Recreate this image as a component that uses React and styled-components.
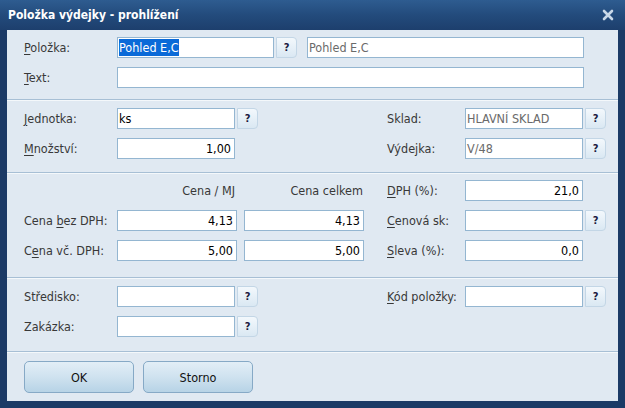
import React from 'react';
import styled, { createGlobalStyle } from 'styled-components';

const Global = createGlobalStyle`
  html, body {
    margin: 0;
    padding: 0;
    background: #1b3a66;
  }
  body {
    font-family: "DejaVu Sans Condensed", Tahoma, "Liberation Sans", sans-serif;
    font-size: 12.5px;
  }
`;

const Window = styled.div`
  width: 625px;
  height: 408px;
  box-sizing: border-box;
  background: #1b3a66;
  padding: 0 7px 7px 7px;
  display: flex;
  flex-direction: column;
`;

const TitleBar = styled.div`
  height: 30px;
  margin: 0 -7px;
  padding: 0 8px 0 8px;
  display: flex;
  align-items: center;
  justify-content: space-between;
  background: linear-gradient(#2e5c90, #234b7c 50%, #1d3f6d);
  color: #fff;
  font-weight: bold;
  font-size: 12px;
`;

const CloseIcon = styled.svg`
  width: 12px;
  height: 12px;
  margin-right: 3px;
`;

const Body = styled.div`
  flex: 1;
  background: #e0e9f2;
  display: flex;
  flex-direction: column;
`;

const Section = styled.div`
  padding: ${(p) => p.$pad || '7px 13px 0 17px'};
  height: ${(p) => p.$h}px;
  box-sizing: border-box;
  border-bottom: ${(p) => (p.$last ? 'none' : '1px solid #a7bfd5')};
  box-shadow: ${(p) => (p.$last ? 'none' : '0 1px 0 #f4f8fb')};
  display: flex;
  flex-direction: column;
  gap: 9px;
`;

const Row = styled.div`
  display: flex;
  align-items: center;
  height: 21px;
`;

const Pane = styled.div`
  display: flex;
  align-items: center;
  width: ${(p) => (p.$w ? `${p.$w}px` : 'auto')};
  flex: ${(p) => (p.$w ? 'none' : '1')};
`;

const Label = styled.span`
  width: ${(p) => p.$w || 93}px;
  flex: none;
  color: #383838;
  white-space: nowrap;
  & u {
    text-decoration: underline;
    text-underline-offset: 2px;
  }
`;

const Input = styled.div`
  width: ${(p) => p.$w}px;
  height: 21px;
  box-sizing: border-box;
  flex: none;
  background: #fff;
  border: 1px solid #94b6d1;
  display: flex;
  align-items: center;
  justify-content: ${(p) => (p.$right ? 'flex-end' : 'flex-start')};
  padding: 0 ${(p) => (p.$right ? '3px' : '1px')};
  color: ${(p) => (p.$dim ? '#6a6a6a' : '#000')};
  margin-left: ${(p) => p.$ml || 0}px;
  white-space: nowrap;
  overflow: hidden;
`;

const Selected = styled.span`
  background: #0a6ad8;
  color: #fff;
  padding: 1px 0;
`;

const Help = styled.div`
  width: 21px;
  height: 21px;
  box-sizing: border-box;
  margin-left: 2px;
  flex: none;
  border: 1px solid #c3d6e6;
  border-radius: 0 4px 4px 0;
  background: linear-gradient(#f3f8fc, #dae8f3);
  color: #1a1a40;
  display: flex;
  align-items: center;
  justify-content: center;
  font-weight: bold;
  font-size: 11px;
`;

const ColHead = styled.span`
  width: ${(p) => p.$w}px;
  margin-left: ${(p) => p.$ml || 0}px;
  text-align: right;
  padding-right: 1px;
  color: #383838;
  box-sizing: border-box;
`;

const Footer = styled.div`
  flex: 1;
  display: flex;
  align-items: flex-start;
  gap: 9px;
  padding: 9px 0 0 17px;
`;

const Button = styled.div`
  width: 110px;
  height: 32px;
  box-sizing: border-box;
  border: 1px solid #86a9c6;
  border-radius: 5px;
  background: linear-gradient(#e2eef7, #cfe2ef 50%, #b7d3e6);
  display: flex;
  align-items: center;
  justify-content: center;
  color: #111;
`;

const Q = () => <Help>?</Help>;

export default function App() {
  return (
    <>
      <Global />
      <Window>
        <TitleBar>
          <span>Položka výdejky - prohlížení</span>
          <CloseIcon viewBox="0 0 12 12">
            <path d="M2 2 L10 10 M10 2 L2 10" stroke="#c9d8e8" strokeWidth="2.6" strokeLinecap="round" />
          </CloseIcon>
        </TitleBar>
        <Body>
          <Section $h={70}>
            <Row>
              <Label><u>P</u>oložka:</Label>
              <Input $w={157}><Selected>Pohled E,C</Selected></Input>
              <Q />
              <Input $w={277} $ml={10} $dim>Pohled E,C</Input>
            </Row>
            <Row>
              <Label><u>T</u>ext:</Label>
              <Input $w={467} />
            </Row>
          </Section>
          <Section $h={73} $pad="8px 13px 0 17px">
            <Row>
              <Pane $w={363}>
                <Label><u>J</u>ednotka:</Label>
                <Input $w={118}>ks</Input>
                <Q />
              </Pane>
              <Pane>
                <Label $w={78}>Sklad:</Label>
                <Input $w={118} $dim>HLAVNÍ SKLAD</Input>
                <Q />
              </Pane>
            </Row>
            <Row>
              <Pane $w={363}>
                <Label><u>M</u>nožství:</Label>
                <Input $w={118} $right>1,00</Input>
              </Pane>
              <Pane>
                <Label $w={78}>Výdejka:</Label>
                <Input $w={118} $dim>V/48</Input>
                <Q />
              </Pane>
            </Row>
          </Section>
          <Section $h={105}>
            <Row>
              <Pane $w={363}>
                <ColHead $w={212}>Cena / MJ</ColHead>
                <ColHead $w={120} $ml={8}>Cena celkem</ColHead>
              </Pane>
              <Pane>
                <Label $w={78}><u>D</u>PH (%):</Label>
                <Input $w={118} $right>21,0</Input>
              </Pane>
            </Row>
            <Row>
              <Pane $w={363}>
                <Label>Cena <u>b</u>ez DPH:</Label>
                <Input $w={120} $right>4,13</Input>
                <Input $w={120} $ml={7} $right>4,13</Input>
              </Pane>
              <Pane>
                <Label $w={78}><u>C</u>enová sk:</Label>
                <Input $w={118} />
                <Q />
              </Pane>
            </Row>
            <Row>
              <Pane $w={363}>
                <Label>C<u>e</u>na vč. DPH:</Label>
                <Input $w={120} $right>5,00</Input>
                <Input $w={120} $ml={7} $right>5,00</Input>
              </Pane>
              <Pane>
                <Label $w={78}><u>S</u>leva (%):</Label>
                <Input $w={118} $right>0,0</Input>
              </Pane>
            </Row>
          </Section>
          <Section $h={74} $pad="8px 13px 0 17px">
            <Row>
              <Pane $w={363}>
                <Label>Středisko:</Label>
                <Input $w={118} />
                <Q />
              </Pane>
              <Pane>
                <Label $w={78}><u>K</u>ód položky:</Label>
                <Input $w={118} />
                <Q />
              </Pane>
            </Row>
            <Row>
              <Pane $w={363}>
                <Label>Zakázka:</Label>
                <Input $w={118} />
                <Q />
              </Pane>
            </Row>
          </Section>
          <Footer>
            <Button>OK</Button>
            <Button>Storno</Button>
          </Footer>
        </Body>
      </Window>
    </>
  );
}
